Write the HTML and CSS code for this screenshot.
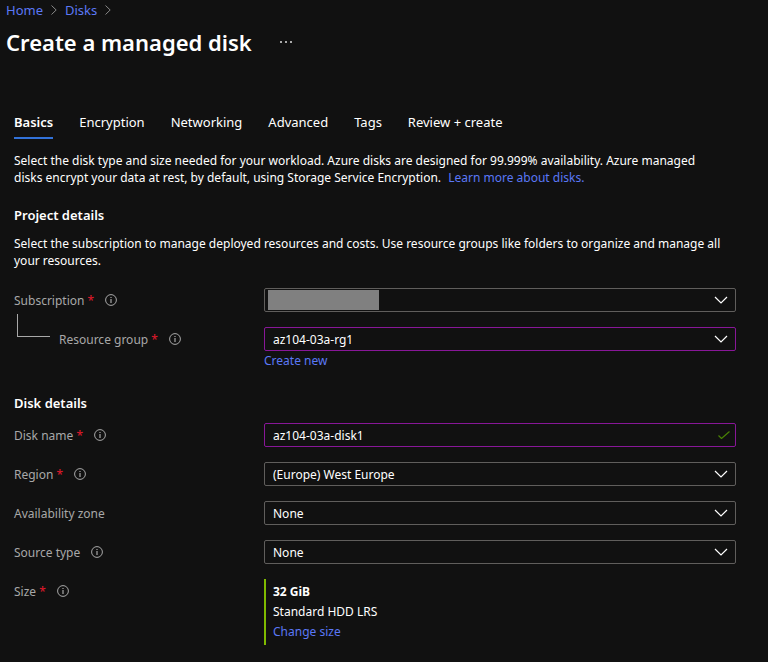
FILE: index.html
```html
<!DOCTYPE html>
<html lang="en">
<head>
<meta charset="utf-8">
<title>Create a managed disk</title>
<link rel="stylesheet" href="styles.css">
</head>
<body>
<svg class="defs" aria-hidden="true">
  <symbol id="chevron-down" viewBox="0 0 14 8"><path d="M1 1l6 6 6-6" fill="none" stroke="currentColor" stroke-width="1.200"/></symbol>
  <symbol id="chevron-right" viewBox="0 0 6 10"><path d="M.5.5L5.200 5 .5 9.500" fill="none" stroke="currentColor"/></symbol>
  <symbol id="info" viewBox="0 0 12 12"><circle cx="6" cy="6" r="5.400" fill="none" stroke="currentColor"/><path d="M5.400 3h1.200v1H5.400zM5.400 5h1.200v4H5.400z" fill="currentColor"/></symbol>
  <symbol id="check" viewBox="0 0 12 8"><path d="M.5 4.500l3 3L11.500.5" fill="none" stroke="currentColor" stroke-width="1.200"/></symbol>
</svg>

<header class="header">
  <nav class="breadcrumb" aria-label="Breadcrumb">
    <a href="#">Home</a>
    <svg class="separator" aria-hidden="true"><use href="#chevron-right"/></svg>
    <a href="#">Disks</a>
    <svg class="separator" aria-hidden="true"><use href="#chevron-right"/></svg>
  </nav>
  <div class="title-row">
    <h1>Create a managed disk</h1>
    <button class="more" type="button" aria-label="More actions"><svg viewBox="0 0 12 2"><path d="M0 0h2v2H0zM5 0h2v2H5zM10 0h2v2h-2z" fill="currentColor"/></svg></button>
  </div>
</header>

<main class="content">
  <nav class="tabs" aria-label="Steps">
    <a class="tab active" href="#" aria-current="step">Basics</a>
    <a class="tab" href="#">Encryption</a>
    <a class="tab" href="#">Networking</a>
    <a class="tab" href="#">Advanced</a>
    <a class="tab" href="#">Tags</a>
    <a class="tab" href="#">Review + create</a>
  </nav>

  <p class="intro">Select the disk type and size needed for your workload. Azure disks are designed for 99.999% availability. Azure managed disks encrypt your data at rest, by default, using Storage Service Encryption. <a class="learn" href="#">Learn more about disks.</a></p>

  <form>
    <section>
      <h2>Project details</h2>
      <p>Select the subscription to manage deployed resources and costs. Use resource groups like folders to organize and manage all your resources.</p>
      <div class="fields project">
        <div class="field">
          <div class="label"><label for="subscription">Subscription <span class="req">*</span></label><svg class="info"><use href="#info"/></svg></div>
          <div class="control">
            <select id="subscription"><option value=""></option></select>
            <span class="redacted"></span>
            <svg class="chevron"><use href="#chevron-down"/></svg>
          </div>
        </div>
        <div class="field">
          <div class="label child"><span class="branch"></span><label for="group">Resource group <span class="req">*</span></label><svg class="info"><use href="#info"/></svg></div>
          <div>
            <div class="control">
              <select class="edited" id="group"><option>az104-03a-rg1</option></select>
              <svg class="chevron"><use href="#chevron-down"/></svg>
            </div>
            <a class="create" href="#">Create new</a>
          </div>
        </div>
      </div>
    </section>

    <section>
      <h2>Disk details</h2>
      <div class="fields">
        <div class="field">
          <div class="label"><label for="name">Disk name <span class="req">*</span></label><svg class="info"><use href="#info"/></svg></div>
          <div class="control">
            <input class="edited" id="name" type="text" value="az104-03a-disk1">
            <svg class="check"><use href="#check"/></svg>
          </div>
        </div>
        <div class="field">
          <div class="label"><label for="region">Region <span class="req">*</span></label><svg class="info"><use href="#info"/></svg></div>
          <div class="control">
            <select id="region"><option>(Europe) West Europe</option></select>
            <svg class="chevron"><use href="#chevron-down"/></svg>
          </div>
        </div>
        <div class="field">
          <div class="label"><label for="zone">Availability zone</label></div>
          <div class="control">
            <select id="zone"><option>None</option></select>
            <svg class="chevron"><use href="#chevron-down"/></svg>
          </div>
        </div>
        <div class="field">
          <div class="label"><label for="source">Source type</label><svg class="info"><use href="#info"/></svg></div>
          <div class="control">
            <select id="source"><option>None</option></select>
            <svg class="chevron"><use href="#chevron-down"/></svg>
          </div>
        </div>
        <div class="field">
          <div class="label"><span>Size <span class="req">*</span></span><svg class="info"><use href="#info"/></svg></div>
          <div class="size">
            <strong>32 GiB</strong>
            <span>Standard HDD LRS</span>
            <a href="#">Change size</a>
          </div>
        </div>
      </div>
    </section>
  </form>
</main>
</body>
</html>
```
FILE: styles.css
```css
* {
  box-sizing: border-box;
}

body {
  margin: 0;
  background: #111;
  color: #fff;
  font: 12px/17px "Noto Sans", "Open Sans", sans-serif;
}

a {
  color: #5b78f6;
  text-decoration: none;
}

h1, h2, p {
  margin: 0;
}

.defs {
  display: none;
}

.header {
  padding: 0 6px;
}

.breadcrumb {
  display: flex;
  align-items: center;
  gap: 8px;
  height: 20px;
  font-size: 13px;
}

.separator {
  width: 6px;
  height: 10px;
  color: #888;
}

.title-row {
  display: flex;
  align-items: center;
  gap: 28px;
  height: 44px;
}

h1 {
  font-size: 22px;
  line-height: 32px;
  font-weight: 600;
}

.more {
  display: flex;
  padding: 0;
  border: 0;
  background: none;
  color: #aaa;
}

.more svg {
  width: 12px;
  height: 2px;
}

.content {
  padding: 46px 32px 16px 14px;
}

.tabs {
  display: flex;
  gap: 26px;
  margin-bottom: 13px;
}

.tab {
  height: 29px;
  padding-top: 4px;
  color: #fff;
  font-size: 13px;
}

.tab.active {
  border-bottom: 2px solid #3272d9;
  font-weight: 600;
}

.intro {
  padding-right: 20px;
}

.learn {
  margin-left: 4px;
}

h2 {
  margin: 20px 0 11px;
  font-size: 13px;
  line-height: 18px;
  font-weight: 600;
}

.fields {
  display: grid;
  gap: 15px;
}

.project {
  margin: 19px 0 25px;
}

.field {
  display: grid;
  grid-template-columns: 250px minmax(0, 1fr);
  align-items: start;
}

.label {
  display: flex;
  align-items: center;
  gap: 11px;
  height: 24px;
  color: #a8a8a8;
}

.child {
  position: relative;
  padding-left: 45px;
}

.branch {
  position: absolute;
  left: 3px;
  bottom: 14px;
  width: 33px;
  height: 23px;
  border: solid #a8a8a8;
  border-width: 0 0 1px 1px;
}

.req {
  color: #e3192b;
}

.info {
  width: 12px;
  height: 12px;
}

.control {
  position: relative;
}

select, input {
  display: block;
  width: 100%;
  height: 24px;
  padding: 0 30px 0 8px;
  border: 1px solid #605e5c;
  border-radius: 2px;
  background: #111;
  color: #fff;
  font: inherit;
  appearance: none;
}

.edited {
  border-color: #881798;
}

.redacted {
  position: absolute;
  top: 2px;
  left: 4px;
  width: 111px;
  height: 20px;
  background: #808080;
}

.chevron {
  position: absolute;
  top: 8px;
  right: 8px;
  width: 14px;
  height: 8px;
  pointer-events: none;
}

.check {
  position: absolute;
  top: 8px;
  right: 6px;
  width: 12px;
  height: 8px;
  color: #498205;
}

.create {
  display: block;
  margin-top: 1px;
}

.size {
  display: grid;
  padding: 3px 0 3px 7px;
  border-left: 2px solid #7fba00;
  line-height: 20px;
}
```
